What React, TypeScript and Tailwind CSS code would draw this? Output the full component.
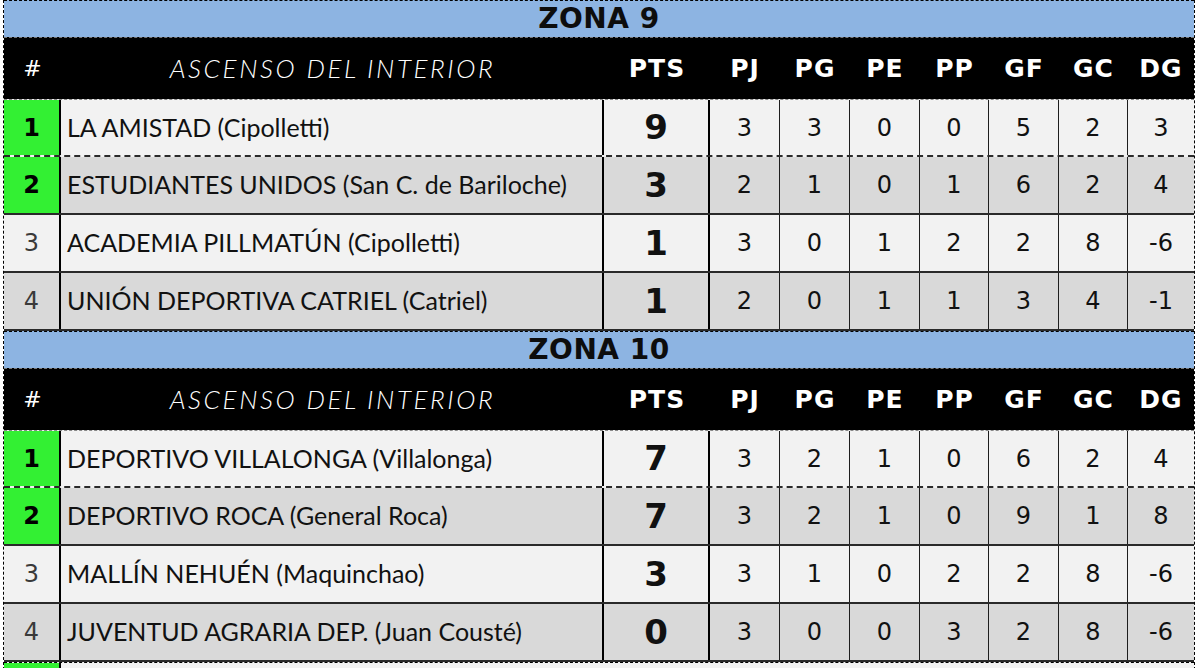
import React from "react"

type Row = {
  pos: number
  team: string
  pts: number
  pj: number
  pg: number
  pe: number
  pp: number
  gf: number
  gc: number
  dg: number
}

const zones: { name: string; rows: Row[] }[] = [
  {
    name: "ZONA 9",
    rows: [
      { pos: 1, team: "LA AMISTAD (Cipolletti)", pts: 9, pj: 3, pg: 3, pe: 0, pp: 0, gf: 5, gc: 2, dg: 3 },
      { pos: 2, team: "ESTUDIANTES UNIDOS (San C. de Bariloche)", pts: 3, pj: 2, pg: 1, pe: 0, pp: 1, gf: 6, gc: 2, dg: 4 },
      { pos: 3, team: "ACADEMIA PILLMATÚN (Cipolletti)", pts: 1, pj: 3, pg: 0, pe: 1, pp: 2, gf: 2, gc: 8, dg: -6 },
      { pos: 4, team: "UNIÓN DEPORTIVA CATRIEL (Catriel)", pts: 1, pj: 2, pg: 0, pe: 1, pp: 1, gf: 3, gc: 4, dg: -1 },
    ],
  },
  {
    name: "ZONA 10",
    rows: [
      { pos: 1, team: "DEPORTIVO VILLALONGA (Villalonga)", pts: 7, pj: 3, pg: 2, pe: 1, pp: 0, gf: 6, gc: 2, dg: 4 },
      { pos: 2, team: "DEPORTIVO ROCA (General Roca)", pts: 7, pj: 3, pg: 2, pe: 1, pp: 0, gf: 9, gc: 1, dg: 8 },
      { pos: 3, team: "MALLÍN NEHUÉN (Maquinchao)", pts: 3, pj: 3, pg: 1, pe: 0, pp: 2, gf: 2, gc: 8, dg: -6 },
      { pos: 4, team: "JUVENTUD AGRARIA DEP. (Juan Cousté)", pts: 0, pj: 3, pg: 0, pe: 0, pp: 3, gf: 2, gc: 8, dg: -6 },
    ],
  },
]

const cols = "grid grid-cols-[57px_543px_106px_70px_70px_70px_69px_70px_69px_66px]"
const stats = ["PJ", "PG", "PE", "PP", "GF", "GC", "DG"]
const numFont = "font-['DejaVu_Sans',sans-serif]"

function Zone({ name, rows }: { name: string; rows: Row[] }) {
  return (
    <div>
      <div className={`h-[37px] bg-[#8db4e2] border-t border-dashed border-black flex items-center justify-center text-[28px] leading-none font-bold tracking-[0.5px] text-[#0d0d0d] ${numFont}`}>
        {name}
      </div>
      <div className={`${cols} h-[62px] bg-black text-white border-t border-dashed border-[#777] items-center`}>
        <div className={`text-center text-[22px] ${numFont}`}>#</div>
        <div className="text-center text-[26px] italic font-light tracking-[2.6px] font-['Lato',sans-serif]">
          ASCENSO DEL INTERIOR
        </div>
        <div className={`text-center text-[25px] font-bold tracking-[1px] ${numFont}`}>PTS</div>
        {stats.map((s) => (
          <div key={s} className={`text-center text-[25px] font-bold tracking-[1px] ${numFont}`}>
            {s}
          </div>
        ))}
      </div>
      {rows.map((r, i) => {
        const bg = i % 2 === 0 ? "bg-[#f2f2f2]" : "bg-[#d9d9d9]"
        const top = i === 0 ? "border-t border-dashed border-t-[#888]" : ""
        const vals = [r.pj, r.pg, r.pe, r.pp, r.gf, r.gc, r.dg]
        return (
          <div key={r.pos} className={`${cols} h-[58px] ${bg} ${top} border-b-2 border-b-[#2a2a2a] text-[#111]`}>
            <div
              className={`flex items-center justify-center border-r-2 border-black ${numFont} text-[24px] ${
                r.pos <= 2 ? "bg-[#33f033] font-bold text-black" : "text-[#3a3a3a]"
              }`}
            >
              {r.pos}
            </div>
            <div className="flex items-center pl-[6px] border-r-2 border-black text-[25px] font-['Lato',sans-serif]">
              {r.team}
            </div>
            <div className={`flex items-center justify-center border-r-2 border-black text-[34px] font-bold ${numFont}`}>
              {r.pts}
            </div>
            {vals.map((v, j) => (
              <div
                key={j}
                className={`flex items-center justify-center text-[24px] ${numFont} ${j < 6 ? "border-r border-[#1e1e1e]" : ""}`}
              >
                {v}
              </div>
            ))}
          </div>
        )
      })}
    </div>
  )
}

export default function App() {
  return (
    <div className="w-[1196px] h-[668px] overflow-hidden bg-white">
      <div className="ml-[3px] w-[1192px] border-x border-dashed border-black">
        {zones.map((z) => (
          <Zone key={z.name} name={z.name} rows={z.rows} />
        ))}
        <div className={`${cols} h-[8px] bg-[#f2f2f2] border-t border-dashed border-black`}>
          <div className="bg-[#33f033] border-r-2 border-black" />
          <div />
        </div>
      </div>
    </div>
  )
}
